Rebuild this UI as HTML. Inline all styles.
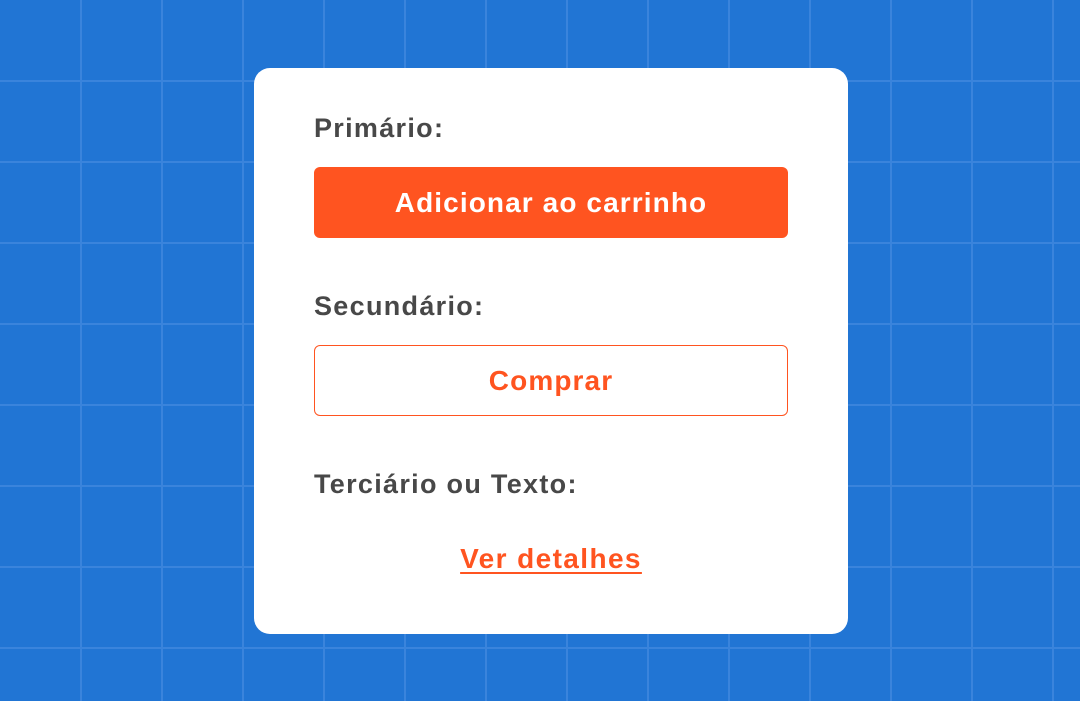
<!DOCTYPE html>
<html><head><meta charset="utf-8"><style>
html,body{margin:0;padding:0;}
body{width:1080px;height:701px;overflow:hidden;position:relative;background-color:#2175d4;font-family:"Liberation Sans",sans-serif;}
.v{position:absolute;top:0;width:2px;height:701px;background:#3a84dc;}
.h{position:absolute;left:0;height:2px;width:1080px;background:#3a84dc;}
.card{position:absolute;left:254px;top:68px;width:594px;height:566px;background:#fff;border-radius:16px;}
.lbl{position:absolute;left:60px;font-size:27px;font-weight:bold;color:#484848;line-height:1;letter-spacing:1.3px;}
.btn{position:absolute;left:60px;width:474px;border-radius:6px;box-sizing:border-box;display:flex;align-items:center;justify-content:center;font-size:28px;font-weight:bold;letter-spacing:1.1px;}
.p{top:99px;height:71px;background:#ff5420;color:#fff;}
.s{top:277px;height:71px;border:1px solid #ff5420;color:#ff5420;}
.link{position:absolute;left:0;width:594px;top:475px;text-align:center;font-size:28px;font-weight:bold;color:#ff5420;text-decoration:underline;text-underline-offset:4px;text-decoration-thickness:2px;letter-spacing:1.4px;}
</style></head><body>
<div class="v" style="left:80px"></div><div class="v" style="left:161px"></div><div class="v" style="left:242px"></div><div class="v" style="left:323px"></div><div class="v" style="left:404px"></div><div class="v" style="left:485px"></div><div class="v" style="left:566px"></div><div class="v" style="left:647px"></div><div class="v" style="left:728px"></div><div class="v" style="left:809px"></div><div class="v" style="left:890px"></div><div class="v" style="left:971px"></div><div class="v" style="left:1052px"></div>
<div class="h" style="top:80px"></div><div class="h" style="top:161px"></div><div class="h" style="top:242px"></div><div class="h" style="top:323px"></div><div class="h" style="top:404px"></div><div class="h" style="top:485px"></div><div class="h" style="top:566px"></div><div class="h" style="top:647px"></div>
<div class="card">
<div class="lbl" style="top:47px">Primário:</div>
<div class="btn p">Adicionar ao carrinho</div>
<div class="lbl" style="top:225px">Secundário:</div>
<div class="btn s">Comprar</div>
<div class="lbl" style="top:403px">Terciário ou Texto:</div>
<div class="link">Ver detalhes</div>
</div>
</body></html>
